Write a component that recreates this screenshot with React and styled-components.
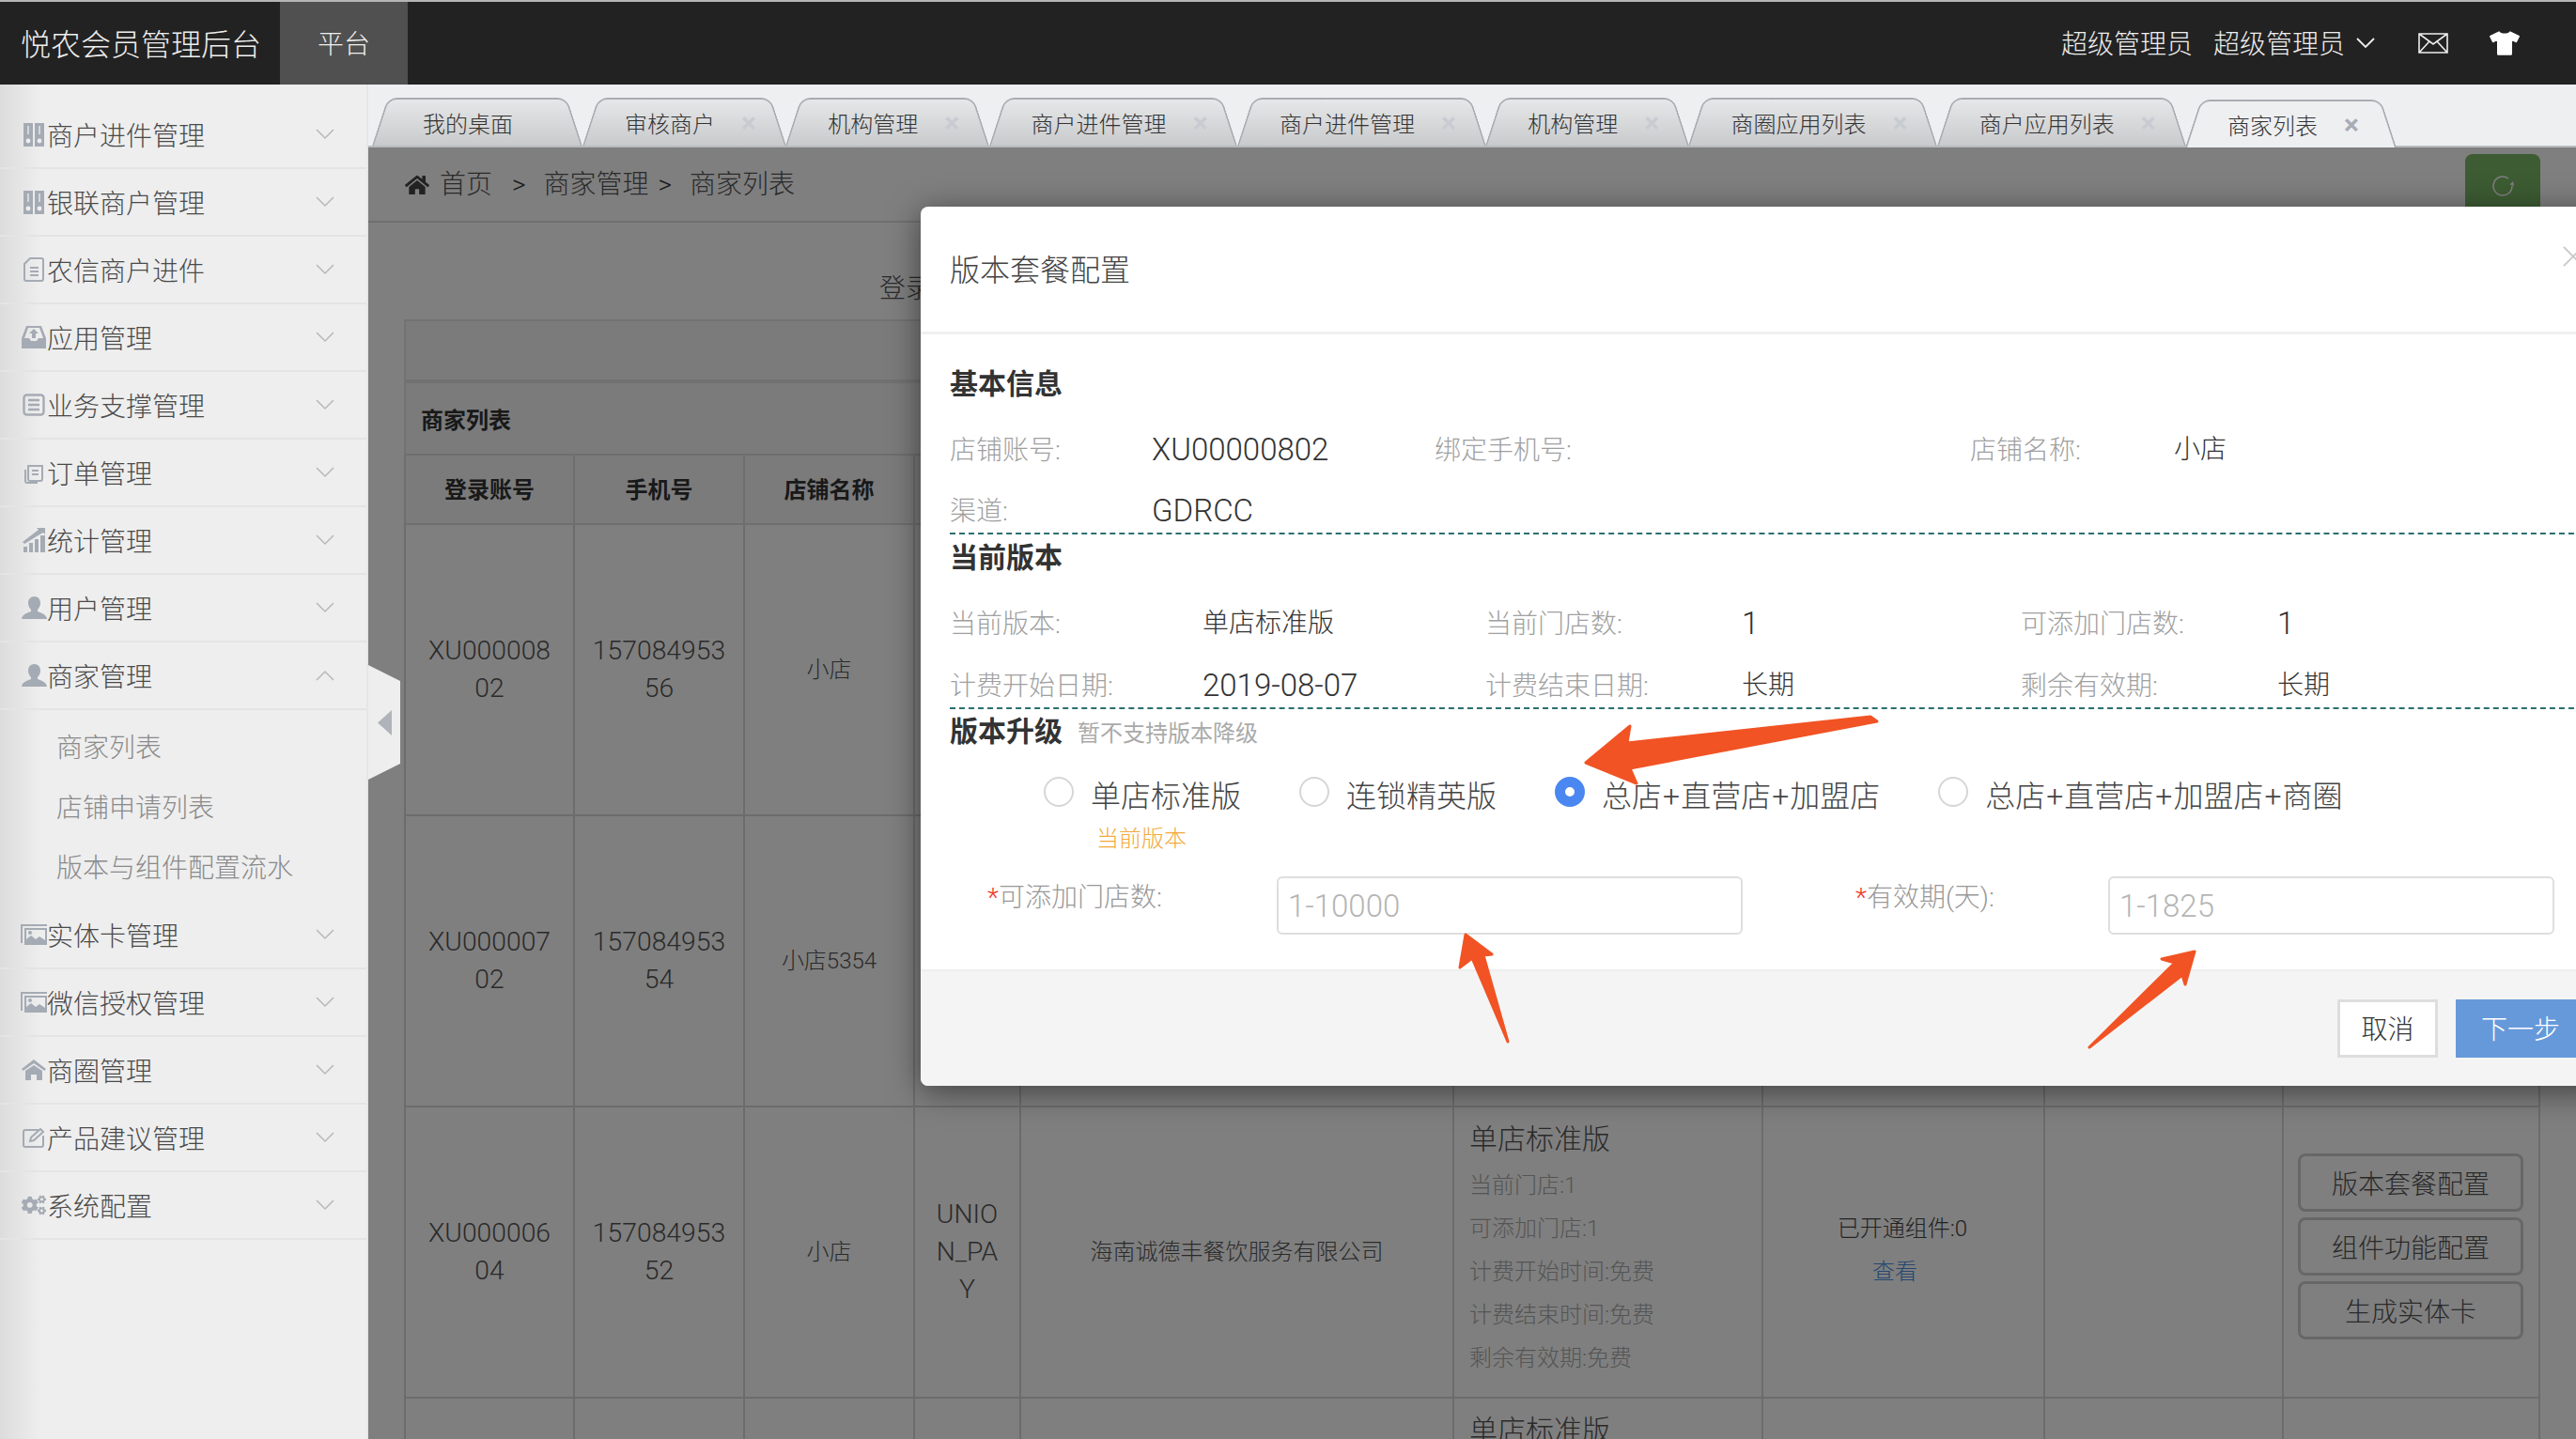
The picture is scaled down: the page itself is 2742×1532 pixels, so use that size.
import styled, { createGlobalStyle } from "styled-components";
import { FaHome, FaTshirt, FaCogs } from "react-icons/fa";

const Binder = () => (
  <svg width="22" height="25" viewBox="0 0 22 25" fill="currentColor">
    <path d="M0 0h10v25H0zM12 0h10v25H12z" />
    <circle cx="5" cy="19" r="2.4" fill="#eee" />
    <circle cx="17" cy="19" r="2.4" fill="#eee" />
    <path d="M4 3h2v9H4zM16 3h2v9h-2z" fill="#d5d8dc" />
  </svg>
);
const Doc = () => (
  <svg width="22" height="26" viewBox="0 0 22 26" fill="none" stroke="currentColor" strokeWidth="2">
    <path d="M7 1h12a2 2 0 0 1 2 2v20a2 2 0 0 1-2 2H3a2 2 0 0 1-2-2V7z" />
    <path d="M7 11h9M7 15h9M7 19h9" />
  </svg>
);
const Tray = () => (
  <svg width="26" height="24" viewBox="0 0 26 24" fill="currentColor">
    <path d="M5 0h16l5 13v11H0V13zM7 2 3 13h5l2 3h6l2-3h5L19 2z" />
    <path d="M13 3l5 5h-3v5h-4V8H8z" />
  </svg>
);
const ListBox = () => (
  <svg width="24" height="24" viewBox="0 0 24 24" fill="none" stroke="currentColor" strokeWidth="2.4">
    <rect x="1.5" y="1.5" width="21" height="21" rx="3" />
    <path d="M6 7h12M6 12h12M6 17h12" />
  </svg>
);
const Copy = () => (
  <svg width="22" height="24" viewBox="0 0 22 24" fill="none" stroke="currentColor" strokeWidth="2">
    <path d="M5 5h10l5 0v14a2 2 0 0 1-2 2H7a2 2 0 0 1-2-2z" />
    <path d="M2 9v12a2 2 0 0 0 2 2h11M9 10h7M9 14h7" />
  </svg>
);
const Stats = () => (
  <svg width="26" height="26" viewBox="0 0 26 26" fill="currentColor">
    <path d="M2 20h4v6H2zM8 16h4v10H8zM14 12h4v14h-4zM20 8h5v18h-5z" />
    <path d="M1 15 14 5l4-3-2-2h9v7l-2-2-7 4L3 17z" />
  </svg>
);
const Picture = () => (
  <svg width="28" height="22" viewBox="0 0 28 22" fill="currentColor">
    <path d="M0 0h28v2H2v18H0z" />
    <path d="M4 4h24v18H4zM6 6v10l5-4 5 4 4-3 6 4V6z" />
    <circle cx="10" cy="9" r="2" />
  </svg>
);
const Roof = () => (
  <svg width="26" height="22" viewBox="0 0 26 22" fill="currentColor">
    <path d="M13 0 26 10l-1.600 2L13 4 1.600 12 0 10z" />
    <path d="M13 6l9 6v10h-6v-6h-6v6H4V12z" />
  </svg>
);
const Pencil = () => (
  <svg width="24" height="22" viewBox="0 0 24 22" fill="none" stroke="currentColor" strokeWidth="2">
    <path d="M17 3H3a2 2 0 0 0-2 2v14a2 2 0 0 0 2 2h17a2 2 0 0 0 2-2V9" />
    <path d="M8 15l1-4L19 2l3 3-10 9z" />
  </svg>
);
const Person = () => (
  <svg width="27" height="24" viewBox="0 0 27 24" fill="currentColor">
    <path d="M13.500 0c4 0 6.500 3 6.500 7 0 3-1.500 5.500-3 7v2c3 1.500 9.500 2.500 10 8H0c.5-5.500 7-6.500 10-8v-2C8.500 12.500 7 10 7 7c0-4 2.500-7 6.500-7z" />
  </svg>
);

const Chevron = ({ up }) => (
  <ChevronSvg viewBox="0 0 20 12" $up={up}>
    <path d="M1 1l9 9 9-9" fill="none" stroke="currentColor" strokeWidth="1.500" />
  </ChevronSvg>
);

const menus = [
  { icon: <Binder />, label: "商户进件管理" },
  { icon: <Binder />, label: "银联商户管理" },
  { icon: <Doc />, label: "农信商户进件" },
  { icon: <Tray />, label: "应用管理" },
  { icon: <ListBox />, label: "业务支撑管理" },
  { icon: <Copy />, label: "订单管理" },
  { icon: <Stats />, label: "统计管理" },
  { icon: <Person />, label: "用户管理" },
  {
    icon: <Person />,
    label: "商家管理",
    open: true,
    subs: ["商家列表", "店铺申请列表", "版本与组件配置流水"],
  },
  { icon: <Picture />, label: "实体卡管理" },
  { icon: <Picture />, label: "微信授权管理" },
  { icon: <Roof />, label: "商圈管理" },
  { icon: <Pencil />, label: "产品建议管理" },
  { icon: <FaCogs size={26} />, label: "系统配置" },
];

const tabs = [
  { label: "我的桌面", first: true },
  { label: "审核商户" },
  { label: "机构管理" },
  { label: "商户进件管理" },
  { label: "商户进件管理" },
  { label: "机构管理" },
  { label: "商圈应用列表" },
  { label: "商户应用列表" },
  { label: "商家列表", active: true },
];

const columns = [180, 181, 181, 113, 461, 329, 300, 254, 273];

const rows = [
  { account: "XU00000802", phone: "15708495356", shop: "小店" },
  { account: "XU00000702", phone: "15708495354", shop: "小店5354" },
  {
    account: "XU00000604",
    phone: "15708495352",
    shop: "小店",
    channel: "UNION_PAY",
    company: "海南诚德丰餐饮服务有限公司",
    version: true,
    parts: true,
    actions: true,
  },
  { version: true },
];

const versionLines = [
  "当前门店:1",
  "可添加门店:1",
  "计费开始时间:免费",
  "计费结束时间:免费",
  "剩余有效期:免费",
];

const plans = [
  { label: "单店标准版", note: "当前版本" },
  { label: "连锁精英版" },
  { label: "总店+直营店+加盟店", checked: true },
  { label: "总店+直营店+加盟店+商圈" },
];

function Menu({ item }) {
  return (
    <>
      <MenuRow>
        <MenuIcon>{item.icon}</MenuIcon>
        <MenuLabel>{item.label}</MenuLabel>
        <Chevron up={item.open} />
      </MenuRow>
      {item.subs && (
        <SubList>
          {item.subs.map((sub) => (
            <SubItem key={sub}>{sub}</SubItem>
          ))}
        </SubList>
      )}
    </>
  );
}

export default function App() {
  return (
    <Page>
      <Global />
      <TopBar>
        <Logo>悦农会员管理后台</Logo>
        <PlatformTab>平台</PlatformTab>
        <TopRight>
          <UserName>超级管理员</UserName>
          <UserName>超级管理员</UserName>
          <TopChevron viewBox="0 0 20 12">
            <path d="M1 1l9 9 9-9" fill="none" stroke="currentColor" strokeWidth="1.800" />
          </TopChevron>
          <MailIcon viewBox="0 0 32 22">
            <path
              d="M1 1h30v20H1zM1 1l15 11L31 1M1 21l11-12M31 21 20 9"
              fill="none"
              stroke="currentColor"
              strokeWidth="1.600"
            />
          </MailIcon>
          <FaTshirt size={32} color="#fff" />
        </TopRight>
      </TopBar>
      <Body>
        <Sidebar>
          {menus.map((item) => (
            <Menu key={item.label} item={item} />
          ))}
        </Sidebar>
        <Main>
          <TabBar>
            {tabs.map((tab, i) => (
              <Tab key={i} $active={tab.active} $first={tab.first}>
                <span>{tab.label}</span>
                {!tab.first && <TabClose $active={tab.active}>×</TabClose>}
              </Tab>
            ))}
          </TabBar>
          <Content>
            <Crumbs>
              <FaHome size={26} color="#444" />
              <CrumbText>首页</CrumbText>
              <CrumbSep>&gt;</CrumbSep>
              <CrumbText>商家管理</CrumbText>
              <CrumbSep $tight>&gt;</CrumbSep>
              <CrumbText>商家列表</CrumbText>
              <RefreshBtn>
                <svg width="26" height="26" viewBox="0 0 26 26" fill="none" stroke="#fff" strokeWidth="1.500">
                  <path d="M23 13a10 10 0 1 1-4-8" />
                  <path d="M20.500 11.500 24 8l1 5z" fill="#fff" stroke="none" />
                </svg>
              </RefreshBtn>
            </Crumbs>
            <SearchBar>
              <SearchLabel>登录账号:</SearchLabel>
            </SearchBar>
            <Panel>
              <ToolBar />
              <PanelTitle>商家列表</PanelTitle>
              <Table>
                <colgroup>
                  {columns.map((w, i) => (
                    <Col key={i} $w={w} />
                  ))}
                </colgroup>
                <thead>
                  <tr>
                    <Th>登录账号</Th>
                    <Th>手机号</Th>
                    <Th>店铺名称</Th>
                    <Th />
                    <Th />
                    <Th />
                    <Th />
                    <Th />
                    <Th />
                  </tr>
                </thead>
                <tbody>
                  {rows.map((row, i) => (
                    <tr key={i}>
                      <Td $latin>{row.account}</Td>
                      <Td $latin>{row.phone}</Td>
                      <Td>{row.shop}</Td>
                      <Td $latin>{row.channel}</Td>
                      <Td>{row.company}</Td>
                      <VersionTd>
                        {row.version && (
                          <>
                            <VersionName>单店标准版</VersionName>
                            {versionLines.map((line) => (
                              <VersionLine key={line}>{line}</VersionLine>
                            ))}
                          </>
                        )}
                      </VersionTd>
                      <Td>
                        {row.parts && (
                          <>
                            <PartLine>已开通组件:0</PartLine>
                            <PartLink>查看</PartLink>
                          </>
                        )}
                      </Td>
                      <Td />
                      <ActionTd>
                        {row.actions && (
                          <ActionStack>
                            <ActionBtn>版本套餐配置</ActionBtn>
                            <ActionBtn>组件功能配置</ActionBtn>
                            <ActionBtn>生成实体卡</ActionBtn>
                          </ActionStack>
                        )}
                      </ActionTd>
                    </tr>
                  ))}
                </tbody>
              </Table>
            </Panel>
            <Mask />
            <Modal>
              <ModalHead>
                版本套餐配置
                <CloseIcon viewBox="0 0 24 24">
                  <path d="M1 1l22 22M23 1 1 23" stroke="#c8c8c8" strokeWidth="2" fill="none" />
                </CloseIcon>
              </ModalHead>
              <ModalBody>
                <SectionTitle $top={36}>基本信息</SectionTitle>
                <InfoRow $cols="215px 301px 215px 355px 217px 1fr" $top={26}>
                  <InfoLabel>店铺账号:</InfoLabel>
                  <InfoValue $latin>XU00000802</InfoValue>
                  <InfoLabel>绑定手机号:</InfoLabel>
                  <InfoValue />
                  <InfoLabel>店铺名称:</InfoLabel>
                  <InfoValue>小店</InfoValue>
                </InfoRow>
                <InfoRow $cols="215px 301px 215px 355px 217px 1fr" $top={15} $dashed>
                  <InfoLabel>渠道:</InfoLabel>
                  <InfoValue $latin>GDRCC</InfoValue>
                </InfoRow>
                <SectionTitle $top={8}>当前版本</SectionTitle>
                <InfoRow $cols="269px 301px 273px 297px 273px 1fr" $top={26}>
                  <InfoLabel>当前版本:</InfoLabel>
                  <InfoValue>单店标准版</InfoValue>
                  <InfoLabel>当前门店数:</InfoLabel>
                  <InfoValue $latin>1</InfoValue>
                  <InfoLabel>可添加门店数:</InfoLabel>
                  <InfoValue $latin>1</InfoValue>
                </InfoRow>
                <InfoRow $cols="269px 301px 273px 297px 273px 1fr" $top={16} $dashed>
                  <InfoLabel>计费开始日期:</InfoLabel>
                  <InfoValue $latin>2019-08-07</InfoValue>
                  <InfoLabel>计费结束日期:</InfoLabel>
                  <InfoValue>长期</InfoValue>
                  <InfoLabel>剩余有效期:</InfoLabel>
                  <InfoValue>长期</InfoValue>
                </InfoRow>
                <SectionTitle $top={7}>
                  版本升级<SectionHint>暂不支持版本降级</SectionHint>
                </SectionTitle>
                <PlanRow>
                  {plans.map((plan) => (
                    <Plan key={plan.label}>
                      <Radio $checked={plan.checked} />
                      {plan.label.split("+").map((part, i) => (
                        <span key={i}>
                          {i > 0 && <PlanPlus>+</PlanPlus>}
                          {part}
                        </span>
                      ))}
                      {plan.note && <PlanNote>{plan.note}</PlanNote>}
                    </Plan>
                  ))}
                </PlanRow>
                <FormRow>
                  <FormLabel $width={348} $left={40}>
                    <Star>*</Star>可添加门店数:
                  </FormLabel>
                  <Input $width={496} placeholder="1-10000" />
                  <FormLabel $width={389} $left={120}>
                    <Star>*</Star>有效期(天):
                  </FormLabel>
                  <Input $width={475} placeholder="1-1825" />
                </FormRow>
              </ModalBody>
              <ModalFoot>
                <CancelBtn>取消</CancelBtn>
                <NextBtn>下一步</NextBtn>
              </ModalFoot>
            </Modal>
          </Content>
        </Main>
      </Body>
      <CollapseHandle>
        <svg width="15" height="27" viewBox="0 0 15 27">
          <path d="M15 0v27L0 13.500z" fill="#b0b4ba" />
        </svg>
      </CollapseHandle>
      <Arrows viewBox="0 0 2742 1532">
        <ArrowShape points="1998,768 1991,763 1732,791 1735,773 1688,812 1742,834 1735,818" />
        <ArrowShape points="1560,995 1588,1016 1579,1017 1605,1109 1567,1020 1554,1030" />
        <ArrowShape points="2336,1013 2301,1021 2315,1025 2224,1115 2323,1038 2326,1048" />
      </Arrows>
    </Page>
  );
}

const Global = createGlobalStyle`
  html, body {
    margin: 0;
    padding: 0;
    background: #fff;
  }
  * {
    box-sizing: border-box;
  }
  body {
    font-family: Roboto, "Noto Sans CJK SC", sans-serif;
    font-weight: 300;
    color: #444;
  }
`;

const Page = styled.div`
  position: relative;
  display: flex;
  flex-direction: column;
  width: 2742px;
  height: 1532px;
  overflow: hidden;
`;

const TopBar = styled.header`
  display: flex;
  align-items: stretch;
  flex: none;
  height: 90px;
  background: #222;
  border-top: 2px solid #b5b5b5;
  color: #eee;
`;
const Logo = styled.div`
  display: flex;
  align-items: center;
  width: 298px;
  padding: 0 0 3px 22px;
  font-size: 32px;
`;
const PlatformTab = styled.div`
  display: flex;
  align-items: center;
  justify-content: center;
  width: 136px;
  padding-bottom: 3px;
  background: #505050;
  font-size: 28px;
`;
const TopRight = styled.div`
  display: flex;
  align-items: center;
  margin-left: auto;
  padding-right: 60px;
`;
const UserName = styled.span`
  margin-right: 22px;
  padding-bottom: 3px;
  font-size: 28px;
  &:nth-child(2) {
    margin-right: 12px;
  }
`;
const TopChevron = styled.svg`
  width: 20px;
  height: 12px;
  margin-right: 46px;
`;
const MailIcon = styled.svg`
  width: 32px;
  height: 22px;
  margin-right: 44px;
`;

const Body = styled.div`
  display: flex;
  flex: 1;
  min-height: 0;
`;

const Sidebar = styled.nav`
  flex: none;
  width: 392px;
  padding-top: 18px;
  background: linear-gradient(90deg, #dcdcdc, #eeeeee 44px);
  border-right: 2px solid #e6e6e6;
`;
const MenuRow = styled.div`
  display: flex;
  align-items: center;
  height: 72px;
  padding-left: 22px;
  border-bottom: 2px solid #e4e4e4;
`;
const MenuIcon = styled.span`
  display: flex;
  justify-content: center;
  width: 28px;
  color: #a5abb4;
`;
const MenuLabel = styled.span`
  flex: 1;
  font-size: 28px;
  color: #4a4a4a;
`;
const ChevronSvg = styled.svg`
  width: 20px;
  height: 12px;
  margin-right: 34px;
  color: #b8b8b8;
  transform: ${(p) => (p.$up ? "scaleY(-1)" : "none")};
`;
const SubList = styled.div`
  padding: 9px 0 3px;
`;
const SubItem = styled.div`
  height: 64px;
  padding-left: 60px;
  font-size: 28px;
  line-height: 64px;
  color: #8a8a8a;
`;

const Main = styled.div`
  display: flex;
  flex-direction: column;
  flex: 1;
  min-width: 0;
`;

const TabBar = styled.div`
  display: flex;
  align-items: flex-end;
  flex: none;
  height: 67px;
  padding-left: 4px;
  background: #eeeff1;
  border-bottom: 2px solid #b8bbbf;
`;
const Tab = styled.div`
  position: relative;
  display: flex;
  align-items: center;
  gap: 28px;
  height: 51px;
  margin-bottom: ${(p) => (p.$active ? "-2px" : "0")};
  padding: ${(p) =>
    p.$first ? "2px 74px 0 54px" : p.$active ? "2px 40px 0 45px" : "2px 31.300px 0 45px"};
  font-size: 24px;
  color: #333;
  isolation: isolate;
  &::before,
  &::after {
    content: "";
    position: absolute;
    top: 0;
    bottom: 0;
    width: 60%;
    z-index: -1;
    border-top: 2px solid #a9acb0;
    background: ${(p) =>
      p.$active ? "#eeeff1" : "linear-gradient(180deg, #e6e7e8, #c9cacc)"};
  }
  &::before {
    left: 0;
    border-left: 2px solid #a9acb0;
    border-top-left-radius: 10px;
    transform-origin: bottom left;
    transform: skewX(-18deg);
  }
  &::after {
    right: 0;
    border-right: 2px solid #a9acb0;
    border-top-right-radius: 10px;
    transform-origin: bottom right;
    transform: skewX(18deg);
  }
`;
const TabClose = styled.span`
  width: 16px;
  font-size: 30px;
  font-weight: 700;
  line-height: 1;
  text-align: center;
  color: ${(p) => (p.$active ? "#a8acb4" : "#c8ccd2")};
`;

const Content = styled.main`
  position: relative;
  flex: 1;
  min-height: 0;
  padding: 0 40px 0 38px;
  background: #fff;
  overflow: hidden;
`;
const Crumbs = styled.div`
  position: relative;
  display: flex;
  align-items: center;
  height: 80px;
  margin: 0 -40px 0 -38px;
  padding: 2px 0 0 39px;
  border-bottom: 2px solid #e0e0e0;
  & > svg:first-child {
    margin-right: 11px;
  }
`;
const CrumbText = styled.span`
  font-size: 28px;
  line-height: 34px;
  color: #555;
`;
const CrumbSep = styled.span`
  margin: 0 19px 0 ${(p) => (p.$tight ? "10px" : "21px")};
  font-size: 28px;
  line-height: 34px;
  color: #333;
`;
const RefreshBtn = styled.div`
  position: absolute;
  top: 7px;
  right: 38px;
  display: flex;
  align-items: center;
  justify-content: center;
  width: 80px;
  height: 68px;
  background: #7ab866;
  border-radius: 8px;
`;
const SearchBar = styled.div`
  display: flex;
  align-items: center;
  height: 103px;
  padding-left: 506px;
  padding-top: 32px;
`;
const SearchLabel = styled.span`
  font-size: 28px;
  color: #555;
`;
const Panel = styled.section`
  display: flex;
  flex-direction: column;
  width: 2272px;
`;
const ToolBar = styled.div`
  height: 68px;
  background: #f6f7f9;
  border: 2px solid #e4e5e7;
  border-bottom-width: 4px;
`;
const PanelTitle = styled.div`
  display: flex;
  align-items: center;
  height: 75px;
  padding-left: 16px;
  background: #f6f7f9;
  border-left: 2px solid #e4e5e7;
  font-size: 24px;
  font-weight: 700;
  color: #333;
`;
const Table = styled.table`
  width: 2272px;
  table-layout: fixed;
  border-collapse: collapse;
`;
const Col = styled.col`
  width: ${(p) => p.$w}px;
`;
const Th = styled.th`
  height: 74px;
  padding: 0 0 3px;
  background: #f6f7f9;
  border: 2px solid #dcdcdc;
  font-size: 24px;
  font-weight: 700;
  color: #333;
`;
const Td = styled.td`
  height: 310px;
  padding: 0 ${(p) => (p.$latin ? "17px" : "20px")};
  border: 2px solid #d8d8d8;
  font-size: ${(p) => (p.$latin ? "28.300px" : "24px")};
  line-height: 40px;
  text-align: center;
  word-break: break-all;
  color: #555;
`;
const VersionTd = styled.td`
  padding: 8px 16px 0;
  border: 2px solid #d8d8d8;
  vertical-align: top;
`;
const VersionName = styled.div`
  font-size: 30px;
  line-height: 52px;
  color: #555;
`;
const VersionLine = styled.div`
  font-size: 24px;
  line-height: 46px;
  color: #aaa;
`;
const PartLine = styled.div`
  margin-top: -4px;
  padding-right: 2px;
  line-height: 46px;
  color: #444;
`;
const PartLink = styled.div`
  padding-right: 18px;
  line-height: 46px;
  color: #4a8fe0;
`;
const ActionTd = styled.td`
  padding: 49px 0 0 15px;
  border: 2px solid #d8d8d8;
  vertical-align: top;
`;
const ActionStack = styled.div`
  display: flex;
  flex-direction: column;
  gap: 6px;
  width: 240px;
`;
const ActionBtn = styled.div`
  display: flex;
  align-items: center;
  justify-content: center;
  height: 62px;
  border: 3px solid #cfcfcf;
  border-radius: 8px;
  font-size: 28px;
  color: #555;
`;

const Mask = styled.div`
  position: absolute;
  inset: 0;
  background: rgba(0, 0, 0, 0.5);
`;
const Modal = styled.div`
  position: absolute;
  top: 63px;
  left: 588px;
  display: flex;
  flex-direction: column;
  width: 1800px;
  height: 936px;
  background: #fff;
  border-radius: 8px;
  box-shadow: 0 6px 34px rgba(0, 0, 0, 0.5);
  overflow: hidden;
`;
const ModalHead = styled.div`
  position: relative;
  display: flex;
  align-items: center;
  flex: none;
  height: 136px;
  padding: 0 0 4px 31px;
  border-bottom: 3px solid #f0f0f0;
  font-size: 32px;
  color: #444;
`;
const CloseIcon = styled.svg`
  position: absolute;
  top: 42px;
  left: 1748px;
  width: 22px;
  height: 22px;
`;
const ModalBody = styled.div`
  flex: 1;
  padding-left: 31px;
`;
const SectionTitle = styled.div`
  display: flex;
  align-items: baseline;
  height: 34px;
  margin-top: ${(p) => p.$top}px;
  font-size: 30px;
  font-weight: 700;
  line-height: 34px;
  color: #333;
`;
const SectionHint = styled.span`
  margin-left: 16px;
  font-size: 24px;
  font-weight: 400;
  color: #aaa;
`;
const InfoRow = styled.div`
  display: grid;
  grid-template-columns: ${(p) => p.$cols};
  align-items: center;
  height: ${(p) => (p.$dashed ? "52px" : "50px")};
  margin-top: ${(p) => p.$top}px;
  border-bottom: ${(p) => (p.$dashed ? "2px dashed #2b6f6f" : "none")};
`;
const InfoLabel = styled.span`
  font-size: 28px;
  color: #a0a0a0;
`;
const InfoValue = styled.span`
  padding-top: 4px;
  font-size: ${(p) => (p.$latin ? "33px" : "28px")};
  line-height: 46px;
  color: #333;
`;
const PlanRow = styled.div`
  display: flex;
  gap: 62px;
  height: 40px;
  margin-top: 29px;
  padding-left: 100px;
`;
const Plan = styled.label`
  position: relative;
  display: flex;
  align-items: center;
  font-size: 32px;
  color: #444;
`;
const PlanPlus = styled.span`
  margin: 0 1px;
`;
const Radio = styled.span`
  flex: none;
  width: 32px;
  height: 32px;
  margin-right: 18px;
  margin-top: -4px;
  border-radius: 50%;
  background: #fff;
  border: ${(p) => (p.$checked ? "11px solid #4b87f0" : "2px solid #d6d6d6")};
`;
const PlanNote = styled.span`
  position: absolute;
  top: 48px;
  left: 56px;
  font-size: 24px;
  color: #f2a93b;
`;
const FormRow = styled.div`
  display: flex;
  height: 62px;
  margin-top: 68px;
`;
const FormLabel = styled.div`
  flex: none;
  width: ${(p) => p.$width}px;
  padding-left: ${(p) => p.$left}px;
  padding-top: 3px;
  font-size: 28px;
  line-height: 40px;
  color: #999;
`;
const Star = styled.span`
  color: #f0392b;
`;
const Input = styled.input`
  flex: none;
  width: ${(p) => p.$width}px;
  height: 62px;
  padding: 0 10px;
  background: #fff;
  border: 2px solid #dedede;
  border-radius: 6px;
  outline: none;
  font-family: Roboto, sans-serif;
  font-size: 33px;
  font-weight: 300;
  &::placeholder {
    color: #b5b5b5;
  }
`;
const ModalFoot = styled.div`
  display: flex;
  align-items: center;
  flex: none;
  height: 124px;
  padding-left: 1508px;
  background: #f4f4f4;
  border-top: 2px solid #eee;
`;
const CancelBtn = styled.div`
  display: flex;
  align-items: center;
  justify-content: center;
  flex: none;
  width: 107px;
  height: 62px;
  padding-bottom: 3px;
  background: #fff;
  border: 3px solid #ddd;
  font-size: 28px;
  color: #333;
`;
const NextBtn = styled.div`
  display: flex;
  align-items: center;
  flex: none;
  width: 180px;
  height: 62px;
  margin-left: 19px;
  padding: 0 0 3px 27px;
  background: #6699d9;
  font-size: 28px;
  color: #fff;
`;

const CollapseHandle = styled.div`
  position: absolute;
  top: 708px;
  left: 392px;
  display: flex;
  align-items: center;
  width: 34px;
  height: 122px;
  padding-left: 10px;
  background: #eeeeee;
  clip-path: polygon(0 0, 100% 14%, 100% 86%, 0 100%);
`;
const Arrows = styled.svg`
  position: absolute;
  top: 0;
  left: 0;
  width: 2742px;
  height: 1532px;
  pointer-events: none;
`;
const ArrowShape = styled.polygon`
  fill: #f15324;
  stroke: #f15324;
  stroke-width: 3;
  stroke-linejoin: round;
`;
